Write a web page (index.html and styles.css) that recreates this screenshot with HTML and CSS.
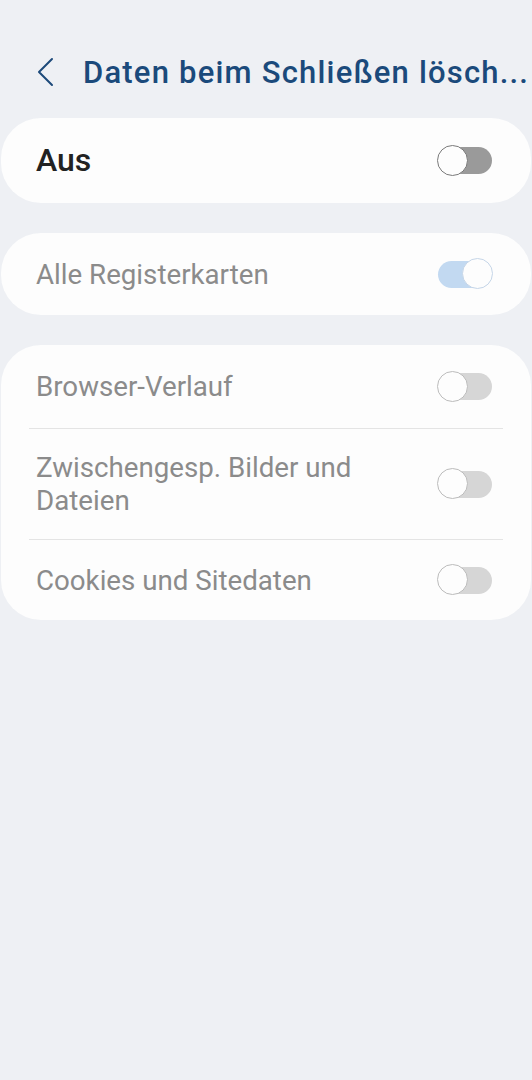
FILE: index.html
```html
<!DOCTYPE html>
<html lang="de">
<head>
<meta charset="utf-8">
<link rel="stylesheet" href="styles.css">
</head>
<body>
<div class="page">
  <header class="header">
    <svg class="back" width="20" height="30" viewBox="0 0 20 30"><polyline points="16,2 3,15 16,28" fill="none" stroke="#1d4a7a" stroke-width="2" stroke-linecap="round" stroke-linejoin="round"/></svg>
    <h1 class="title">Daten beim Schließen lösch...</h1>
  </header>

  <section class="card main">
    <span class="label main-label">Aus</span>
    <span class="toggle off dark"><span class="thumb"></span></span>
  </section>

  <section class="card single">
    <span class="label">Alle Registerkarten</span>
    <span class="toggle on"><span class="thumb"></span></span>
  </section>

  <section class="card list">
    <div class="row r1">
      <span class="label">Browser-Verlauf</span>
      <span class="toggle off"><span class="thumb"></span></span>
    </div>
    <div class="divider"></div>
    <div class="row r2">
      <span class="label">Zwischengesp. Bilder und Dateien</span>
      <span class="toggle off"><span class="thumb"></span></span>
    </div>
    <div class="divider"></div>
    <div class="row r3">
      <span class="label">Cookies und Sitedaten</span>
      <span class="toggle off"><span class="thumb"></span></span>
    </div>
  </section>
</div>
</body>
</html>
```

FILE: styles.css
```css
html, body {
  margin: 0;
  padding: 0;
  background: #eef0f4;
}
body {
  font-family: Roboto, "Noto Sans", sans-serif;
  width: 532px;
  height: 1080px;
}
.page {
  padding: 0 1px;
}
.header {
  display: flex;
  align-items: center;
  height: 48px;
  padding: 48px 0 22px 35px;
}
.back {
  flex: none;
}
.title {
  margin: 0 0 0 27px;
  font-size: 31px;
  font-weight: 500;
  color: #1b4a7b;
  white-space: nowrap;
  letter-spacing: 1.2px;
}
.card {
  background: #fdfdfd;
  border-radius: 40px;
  margin-bottom: 30px;
}
.main, .single, .row {
  display: flex;
  align-items: center;
  justify-content: space-between;
  padding: 0 39px 0 35px;
}
.main { height: 85px; }
.single { height: 82px; }
.r1 { height: 83px; }
.r2 { height: 110px; }
.r3 { height: 80px; }
.label {
  font-size: 27.7px;
  color: #8b8b8b;
  line-height: 33px;
  max-width: 380px;
}
.main-label {
  font-size: 32px;
  font-weight: 500;
  color: #222;
}
.divider {
  height: 1px;
  background: #e4e4e4;
  margin: 0 28px;
}
.toggle {
  flex: none;
  position: relative;
  width: 54px;
  height: 27px;
  border-radius: 14px;
  background: #d6d6d6;
}
.toggle.dark { background: #9a9a9a; }
.toggle.on { background: #c2d9f1; }
.thumb {
  position: absolute;
  top: -2.5px;
  left: -1px;
  width: 29px;
  height: 29px;
  border-radius: 50%;
  background: #fdfdfd;
  border: 1.2px solid #bcbcbc;
}
.toggle.dark .thumb { border-color: #7a7a7a; }
.toggle.on .thumb {
  left: auto;
  right: -1px;
  border-color: #c6d6e8;
}
```
